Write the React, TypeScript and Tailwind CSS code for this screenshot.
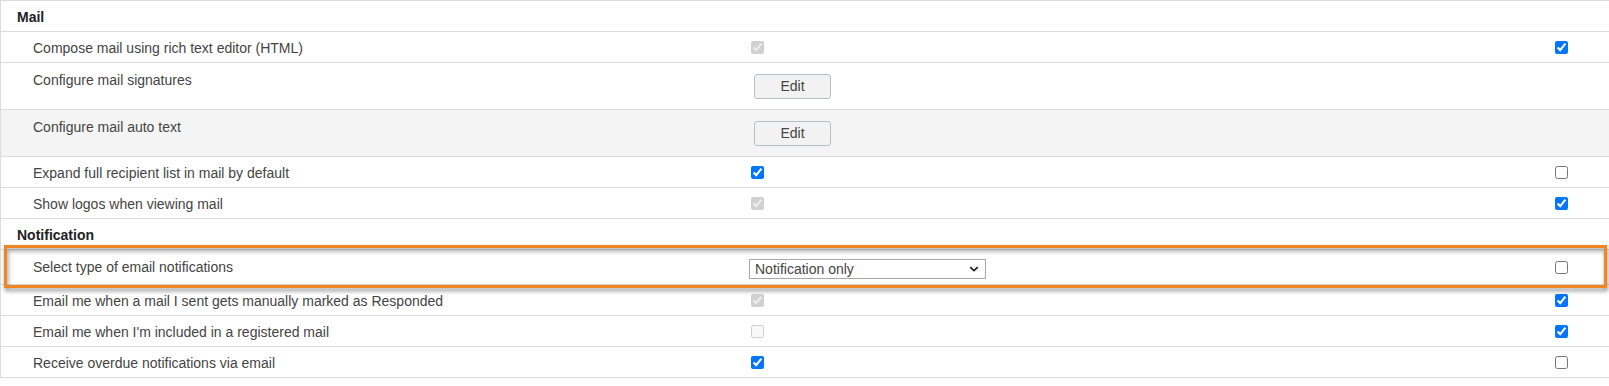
import React from 'react';

// ---------- Types ----------

type MidCell =
  | { kind: 'check'; checked: boolean; disabled?: boolean }
  | { kind: 'edit' }
  | { kind: 'select'; value: string };

interface SettingRow {
  label: string;
  mid: MidCell;
  /** Right column checkbox. Null when the row has none. */
  right: boolean | null;
  tall?: boolean;
  shaded?: boolean;
}

interface SettingSection {
  title: string;
  rows: SettingRow[];
}

// ---------- Data ----------

const SECTIONS: SettingSection[] = [
  {
    title: 'Mail',
    rows: [
      { label: 'Compose mail using rich text editor (HTML)', mid: { kind: 'check', checked: true, disabled: true }, right: true },
      { label: 'Configure mail signatures', mid: { kind: 'edit' }, right: null, tall: true },
      { label: 'Configure mail auto text', mid: { kind: 'edit' }, right: null, tall: true, shaded: true },
      { label: 'Expand full recipient list in mail by default', mid: { kind: 'check', checked: true }, right: false },
      { label: 'Show logos when viewing mail', mid: { kind: 'check', checked: true, disabled: true }, right: true },
    ],
  },
  {
    title: 'Notification',
    rows: [
      { label: 'Select type of email notifications', mid: { kind: 'select', value: 'Notification only' }, right: false },
      { label: 'Email me when a mail I sent gets manually marked as Responded', mid: { kind: 'check', checked: true, disabled: true }, right: true },
      { label: "Email me when I'm included in a registered mail", mid: { kind: 'check', checked: false, disabled: true }, right: true },
      { label: 'Receive overdue notifications via email', mid: { kind: 'check', checked: true }, right: false },
    ],
  },
];

// ---------- Cells ----------

function Checkbox({ checked, disabled }: { checked: boolean; disabled?: boolean }) {
  return (
    <input
      type="checkbox"
      defaultChecked={checked}
      disabled={disabled}
      className="m-0 h-[13px] w-[13px]"
    />
  );
}

function Middle({ cell }: { cell: MidCell }) {
  if (cell.kind === 'edit') {
    return (
      <button
        type="button"
        className="ml-[6px] mt-[11px] h-[25px] w-[77px] rounded-[3px] border border-[#b9bec5] bg-[#f2f2f2] text-[14px] text-[#444]"
      >
        Edit
      </button>
    );
  }
  if (cell.kind === 'select') {
    return (
      <div className="relative ml-px mt-[3px] h-[20px] w-[237px]">
        <select
          defaultValue={cell.value}
          className="h-full w-full appearance-none border border-[#a9a9a9] bg-white pl-[5px] text-[14px] leading-[18px] text-[#444] outline-none"
        >
          <option>Notification only</option>
          <option>Full message</option>
          <option>None</option>
        </select>
        <svg
          viewBox="0 0 10 6"
          className="pointer-events-none absolute right-[7px] top-[7px] h-[6px] w-[10px]"
          aria-hidden="true"
        >
          <path d="M1.2 1.2 L5 4.6 L8.8 1.2" fill="none" stroke="#222" strokeWidth="1.8" />
        </svg>
      </div>
    );
  }
  return (
    <div className="ml-[3px] flex">
      <Checkbox checked={cell.checked} disabled={cell.disabled} />
    </div>
  );
}

function Row({ row }: { row: SettingRow }) {
  const isSelect = row.mid.kind === 'select';
  // Label sits at the top of tall rows, centred (nudged a pixel down) elsewhere
  const labelPad = row.tall ? 'pt-[9px]' : isSelect ? '' : 'pt-[2px]';
  return (
    <div
      className={[
        'grid grid-cols-[747px_803px_58px] border-b border-[#dcdcdc]',
        row.tall ? 'h-[47px] items-start' : isSelect ? 'h-[35px] items-center' : 'h-[31px] items-center',
        row.shaded ? 'bg-[#f4f4f4]' : 'bg-white',
      ].join(' ')}
    >
      <div className={['pl-[32px] leading-[16px]', labelPad].join(' ')}>{row.label}</div>
      <div>
        <Middle cell={row.mid} />
      </div>
      <div className="flex pl-[4px]">
        {row.right !== null && <Checkbox checked={row.right} />}
      </div>
    </div>
  );
}

// ---------- Page ----------

export default function App() {
  return (
    <div className="relative h-[386px] w-[1609px] overflow-hidden bg-white font-['Liberation_Sans',Arial,sans-serif] text-[14px] text-[#444]">
      <div className="border-l border-t border-[#dcdcdc]">
        {SECTIONS.map((section) => (
          <div key={section.title}>
            <div className="flex h-[31px] items-center border-b border-[#dcdcdc] pl-[16px] pt-[2px] font-bold text-[#222]">
              {section.title}
            </div>
            {section.rows.map((row) => (
              <Row key={row.label} row={row} />
            ))}
          </div>
        ))}
      </div>

      {/* Highlight annotation over the notification type row */}
      <div className="pointer-events-none absolute left-[4px] top-[245px] h-[43px] w-[1603px] border-[3px] border-[#ef8523] [filter:drop-shadow(1px_3px_2px_rgba(0,0,0,0.45))]" />
    </div>
  );
}
